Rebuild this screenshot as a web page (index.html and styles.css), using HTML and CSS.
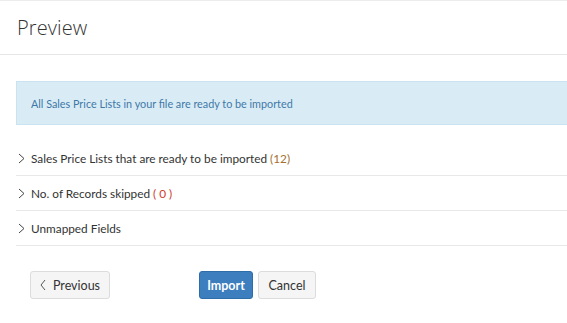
FILE: index.html
```html
<!DOCTYPE html>
<html>
<head>
<meta charset="utf-8">
<link rel="stylesheet" href="styles.css">
</head>
<body>
<div class="page">
  <header class="header"><h1 class="title">Preview</h1></header>
  <main class="content">
    <div class="alert">All Sales Price Lists in your file are ready to be imported</div>
    <ul class="list">
      <li class="row"><svg class="chev" width="7" height="11" viewBox="0 0 7 11"><path d="M1 1 L6 5.5 L1 10" fill="none" stroke="#444" stroke-width="1"/></svg>Sales Price Lists that are ready to be imported <span class="count-ok">(12)</span></li>
      <li class="row"><svg class="chev" width="7" height="11" viewBox="0 0 7 11"><path d="M1 1 L6 5.5 L1 10" fill="none" stroke="#444" stroke-width="1"/></svg>No. of Records skipped <span class="count-bad">( 0 )</span></li>
      <li class="row"><svg class="chev" width="7" height="11" viewBox="0 0 7 11"><path d="M1 1 L6 5.5 L1 10" fill="none" stroke="#444" stroke-width="1"/></svg>Unmapped Fields</li>
    </ul>
    <div class="actions">
      <button class="btn btn-default btn-prev"><svg class="prev-icon" width="6" height="12" viewBox="0 0 6 12"><path d="M5 1 L1 6 L5 11" fill="none" stroke="#555" stroke-width="1"/></svg>Previous</button>
      <div class="action-group">
        <button class="btn btn-primary btn-import">Import</button>
        <button class="btn btn-default btn-cancel">Cancel</button>
      </div>
    </div>
  </main>
</div>
</body>
</html>
```
FILE: styles.css
```css
html, body { margin: 0; padding: 0; background: #fff; }
body { overflow: hidden; font-family: Lato, "Open Sans", sans-serif; color: #333; }
.page { border-top: 1px solid #ececec; }
.header { height: 53px; border-bottom: 1px solid #e6e6e6; display: flex; align-items: center; padding-left: 17px; }
.title { margin: 0; font-family: "Open Sans", sans-serif; font-weight: 300; font-size: 20px; color: #333; letter-spacing: 0.1px; }
.content { padding: 26px 0 0 16px; }
.alert { height: 42px; background: #d9ecf6; border: 1px solid #c9e3f1; border-right: none; display: flex; align-items: center; padding-left: 14px; font-size: 10.8px; color: #3f78a6; }
.list { list-style: none; margin: 16px 0 0; padding: 0; }
.row { height: 34px; border-bottom: 1px solid #e8e8e8; display: flex; align-items: center; font-size: 11.8px; color: #333; white-space: pre; }
.chev { display: block; margin: 0 6px 0 2px; }
.count-ok { color: #a5712f; }
.count-bad { color: #d0392c; }
.actions { display: flex; margin-top: 25px; padding-left: 14px; }
.action-group { display: flex; gap: 5px; margin-left: 89px; }
.btn { height: 28px; border-radius: 3px; font-family: Lato, sans-serif; font-size: 12.5px; padding: 0; display: flex; align-items: center; justify-content: center; cursor: pointer; }
.btn-default { background: #f5f5f5; border: 1px solid #dcdcdc; color: #333; }
.btn-primary { background: #3d7ebf; border: 1px solid #2e6da8; color: #fff; font-weight: bold; }
.btn-prev { width: 80px; gap: 7px; }
.btn-import { width: 54px; }
.btn-cancel { width: 58px; }
.prev-icon { display: block; }
```
